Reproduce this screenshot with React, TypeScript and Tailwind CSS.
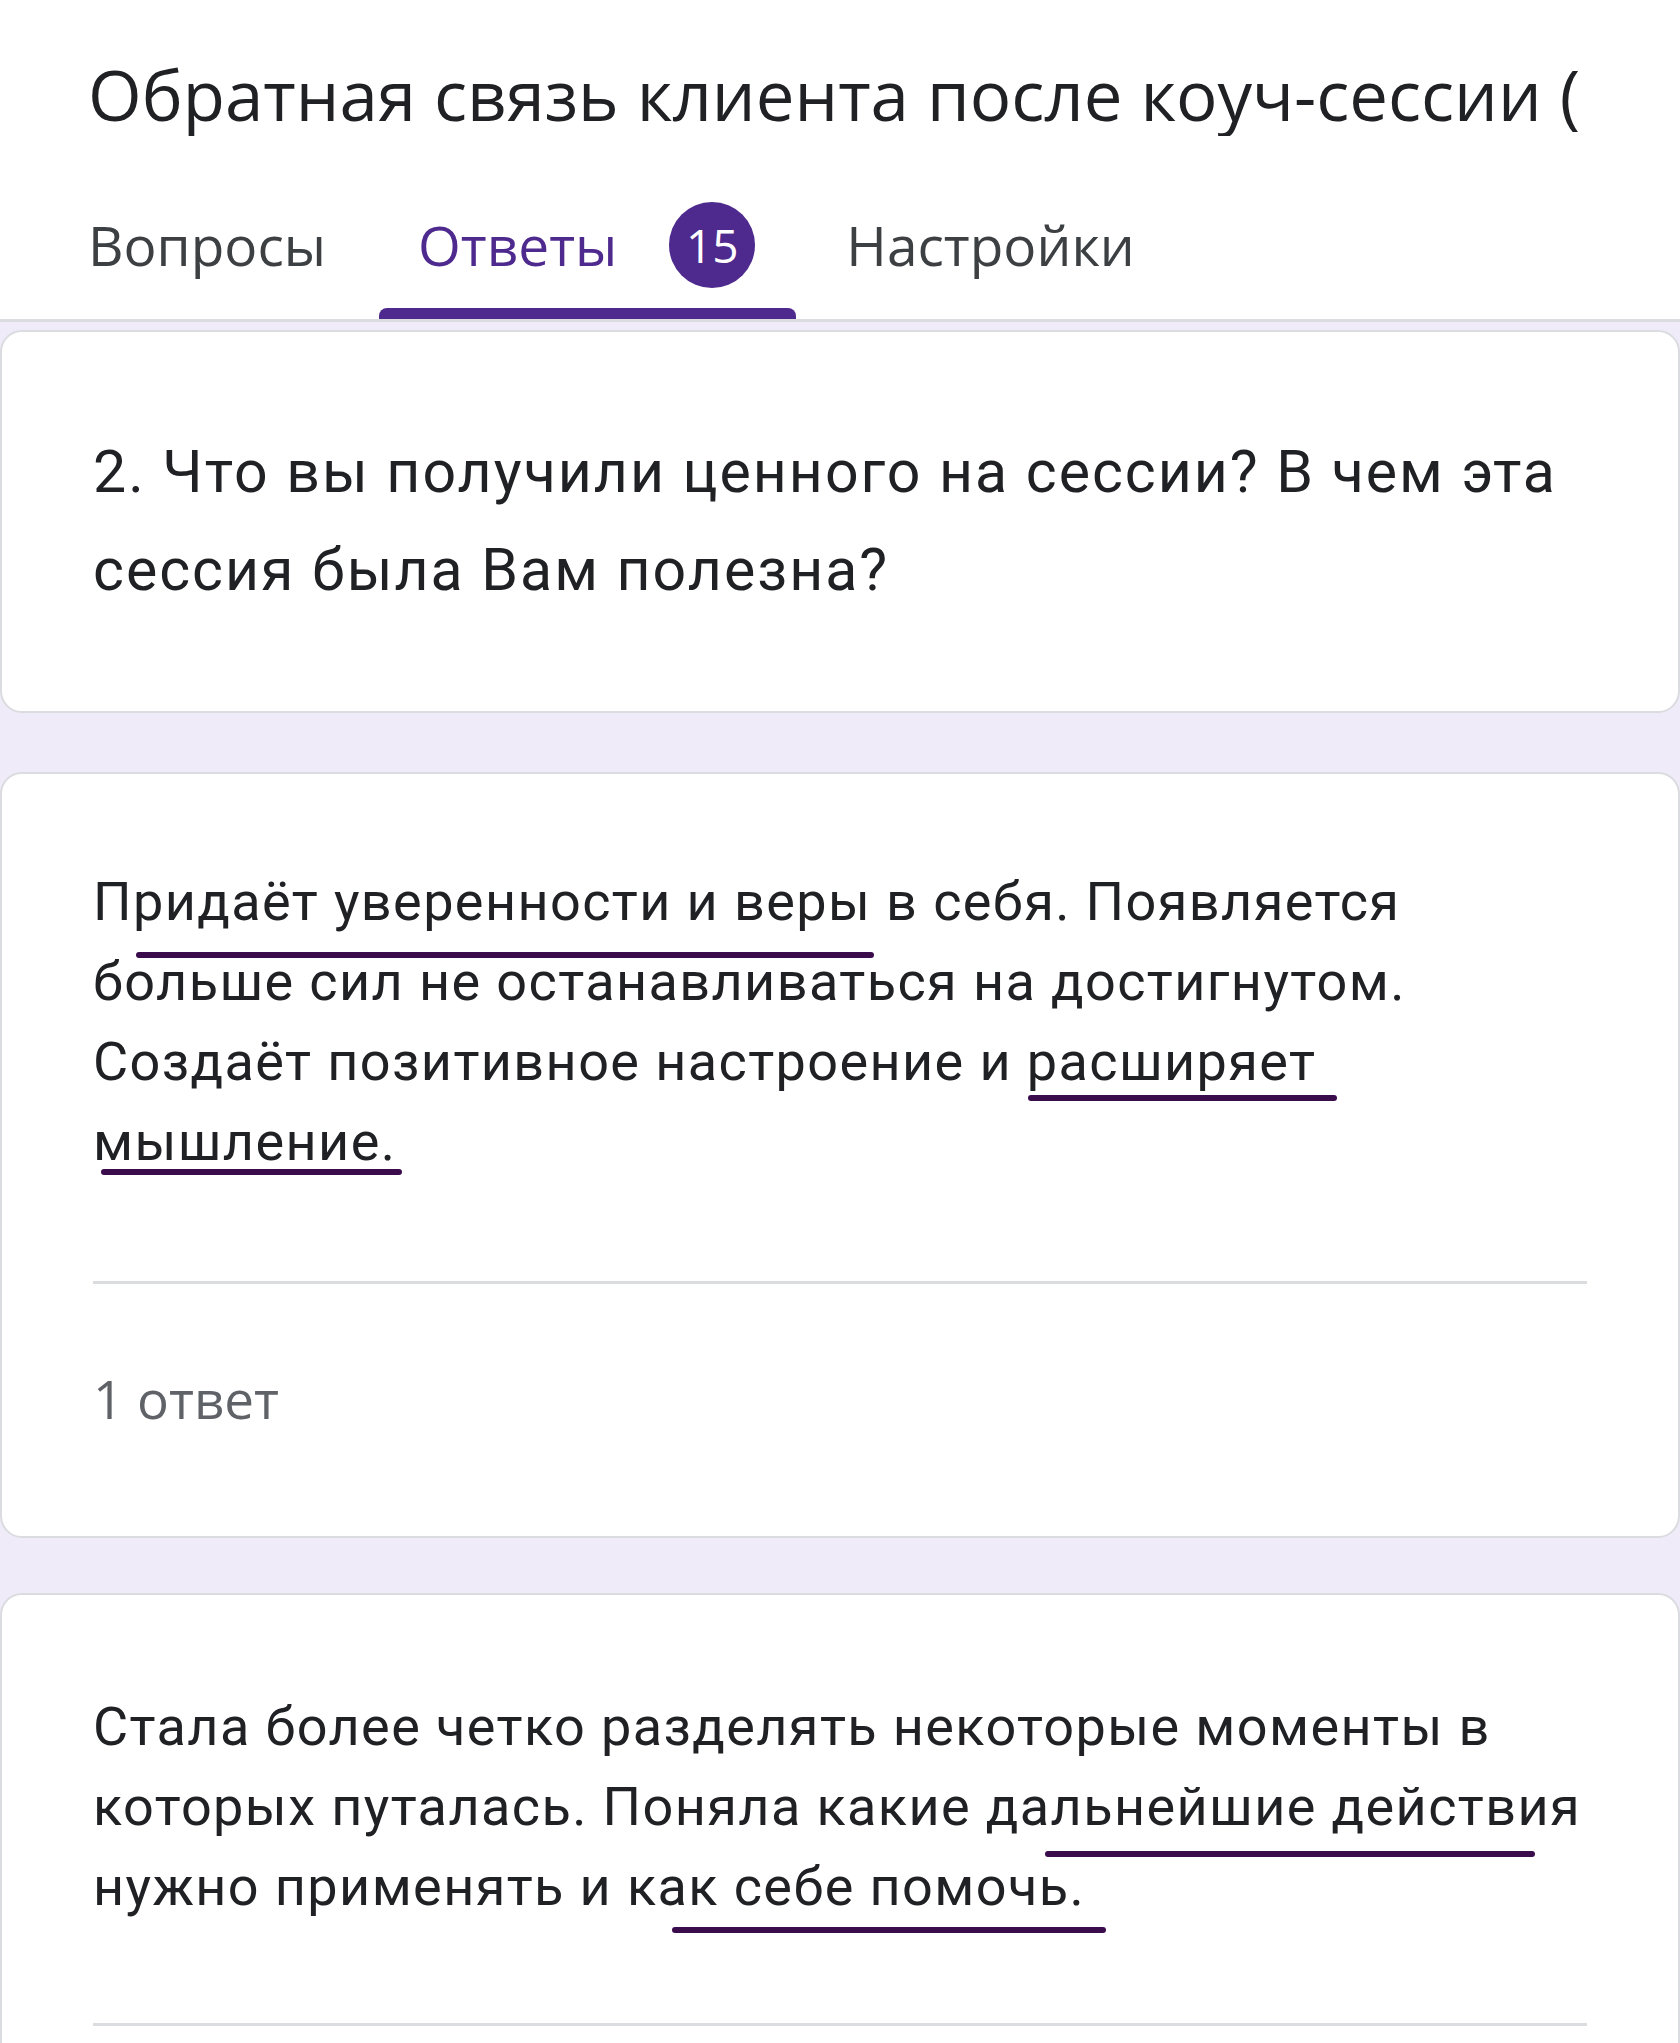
import React from 'react';

const Mark = ({ className }: { className: string }) => (
  <div className={`absolute h-[6px] rounded-full bg-[#3a0c4c] ${className}`} />
);

const App: React.FC = () => {
  return (
    <div className="min-h-screen bg-[#efebf8] overflow-hidden" style={{ fontFamily: 'Roboto, "Noto Sans", sans-serif' }}>
      {/* header */}
      <div className="bg-white">
        <div className="pt-[52px] pl-[88px] w-[1578px] overflow-hidden">
          <h1 className="whitespace-nowrap text-[69px] leading-[84px] text-[#202124]" style={{ fontFamily: '"Open Sans", sans-serif' }}>
            Обратная связь клиента после коуч-сессии (ответы)
          </h1>
        </div>
        <div className="mt-[54px] flex gap-[12px] pl-[47px]" style={{ fontFamily: '"Open Sans", sans-serif' }}>
          <div className="h-[129px] px-[41px] pt-[24px]">
            <div className="h-[62px] flex items-center text-[55px] text-[#3c4043] whitespace-nowrap">Вопросы</div>
          </div>
          <div className="relative h-[129px] pl-[39px] pr-[41px] pt-[24px]">
            <div className="h-[62px] flex items-center gap-[52px]">
              <span className="text-[55px] text-[#4e2a8e] whitespace-nowrap">Ответы</span>
              <span className="w-[86px] h-[86px] rounded-full bg-[#4e2a8e] text-white text-[46px] flex items-center justify-center">15</span>
            </div>
            <div className="absolute left-0 right-0 bottom-0 h-[11px] rounded-t-[8px] bg-[#4e2a8e]" />
          </div>
          <div className="h-[129px] px-[38px] pt-[24px]">
            <div className="h-[62px] flex items-center text-[55px] text-[#3c4043] whitespace-nowrap">Настройки</div>
          </div>
        </div>
        <div className="h-[3px] bg-[#dadce0]" />
      </div>

      {/* question card */}
      <div className="mt-[8px] bg-white rounded-[22px] border-2 border-[#dadce0] px-[91px] pt-[91px] pb-[92px]">
        <p className="whitespace-nowrap text-[59px] leading-[98px] tracking-[2px] text-[#202124]">
          2. Что вы получили ценного на сессии? В чем эта
          <br />
          сессия была Вам полезна?
        </p>
      </div>

      {/* answer 1 */}
      <div className="relative mt-[59px] bg-white rounded-[22px] border-2 border-[#dadce0] px-[91px] pt-[88px] pb-[107px]">
        <p className="whitespace-nowrap text-[54px] leading-[80px] tracking-[1.4px] text-[#202124]">
          Придаёт уверенности и веры в себя. Появляется
          <br />
          больше сил не останавливаться на достигнутом.
          <br />
          Создаёт позитивное настроение и расширяет
          <br />
          мышление.
        </p>
        <div className="mt-[99px] h-[3px] bg-[#dadce0]" />
        <p className="mt-[85px] text-[53px] leading-[60px] font-medium text-[#5f6368]" style={{ fontFamily: '"Open Sans", sans-serif' }}>
          1 ответ
        </p>
        <Mark className="left-[134px] w-[738px] top-[178px]" />
        <Mark className="left-[1026px] w-[309px] top-[321px]" />
        <Mark className="left-[99px] w-[301px] top-[395px]" />
      </div>

      {/* answer 2 */}
      <div className="relative mt-[55px] bg-white rounded-[22px] border-2 border-[#dadce0] px-[91px] pt-[92px] pb-[100px]">
        <p className="whitespace-nowrap text-[54px] leading-[80px] tracking-[1.4px] text-[#202124]">
          Стала более четко разделять некоторые моменты в
          <br />
          которых путалась. Поняла какие дальнейшие действия
          <br />
          нужно применять и как себе помочь.
        </p>
        <div className="mt-[96px] h-[3px] bg-[#dadce0]" />
        <Mark className="left-[1043px] w-[490px] top-[256px]" />
        <Mark className="left-[670px] w-[434px] top-[332px]" />
      </div>
    </div>
  );
};

export default App;
